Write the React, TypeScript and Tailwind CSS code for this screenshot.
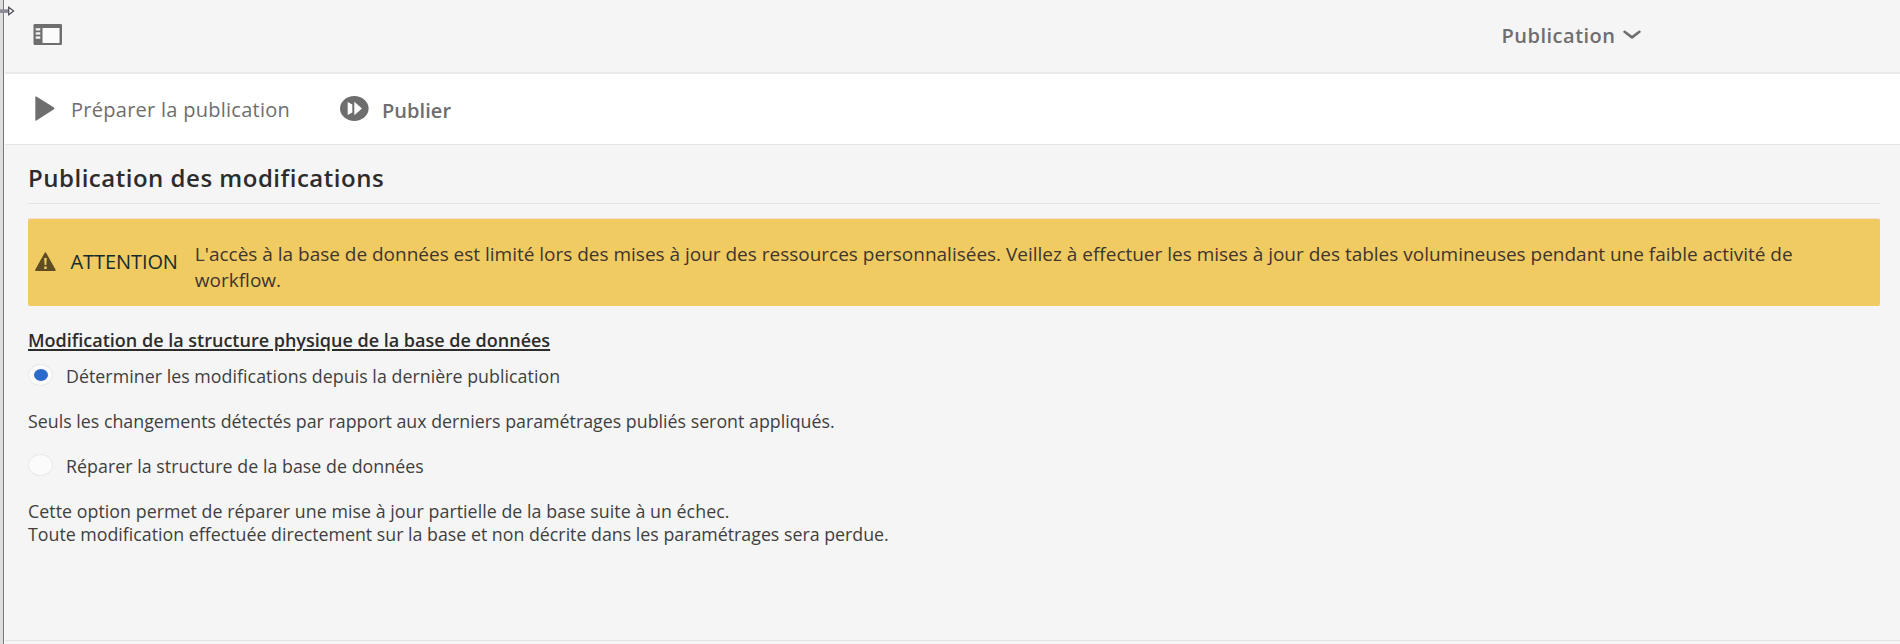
import type { ReactNode } from "react";

function PanelIcon() {
  return (
    <svg width="30" height="22" viewBox="0 0 30 22" className="block">
      <rect x="0.5" y="0" width="28.5" height="21" rx="1.2" fill="#6e6e6e" />
      <rect x="9.5" y="4" width="17" height="15" fill="#fbfbfb" />
      <rect x="2.7" y="4.2" width="4.6" height="2.3" fill="#f5f5f5" />
      <rect x="2.7" y="8.3" width="4.6" height="2.3" fill="#f5f5f5" />
      <rect x="2.7" y="12.4" width="4.6" height="2.3" fill="#f5f5f5" />
    </svg>
  );
}

function PlayIcon() {
  return (
    <svg width="20" height="26" viewBox="0 0 20 26" className="block">
      <path d="M0.3 1.2Q0.3 0 1.4 0.6L19 11.6Q19.8 12.4 19 13.2L1.4 24.6Q0.3 25.2 0.3 24Z" fill="#6e6e6e" />
    </svg>
  );
}

function PublishIcon() {
  return (
    <svg width="29" height="26" viewBox="0 0 29 26" className="block">
      <ellipse cx="14.3" cy="12.5" rx="14.3" ry="12.5" fill="#6e6e6e" />
      <path d="M7.7 6L12.3 8.4V16.6L7.7 19ZM14.3 5.8L22 12.5L14.3 19.2Z" fill="#fff" />
    </svg>
  );
}

function WarningIcon() {
  return (
    <svg width="21" height="20" viewBox="0 0 21 20" className="block">
      <path d="M9.6 0.9Q10.4 -0.2 11.2 0.9L20.6 17.8Q21 19 19.8 19H1Q-0.2 19 0.2 17.8Z" fill="#5e4d24" />
      <path d="M9.2 6H11.7L11.3 13H9.6ZM9.2 14.6H11.7V17H9.2Z" fill="#f0cb62" />
    </svg>
  );
}

function Radio({ checked, children }: { checked?: boolean; children: ReactNode }) {
  return (
    <label className="flex h-[22px] items-start">
      <span className="mr-[13px] flex h-[22px] w-[25px] shrink-0 items-center justify-center rounded-[50%] border-[1.5px] border-[#e9e9e9] bg-[#fbfbfb]">
        {checked && <span className="h-[12px] w-[14px] rounded-[50%] bg-[#2c6bc9]" />}
      </span>
      <span className="mt-px whitespace-nowrap text-[17.8px] leading-[22px] tracking-[0.04px]">{children}</span>
    </label>
  );
}

export default function App() {
  return (
    <div className="relative flex h-[644px] w-[1900px] overflow-hidden bg-[#f5f5f5] font-['Open_Sans',sans-serif] text-[#3f3f3f]">
      <div className="w-[5px] shrink-0 border-r border-r-[#fafafa] bg-[#dedede]">
        <div className="ml-[3px] h-full w-px bg-[#777]" />
      </div>
      <svg width="16" height="12" viewBox="0 0 16 12" className="absolute left-0 top-[5px]">
        <rect x="0" y="4.3" width="9" height="3.6" fill="#8d8993" />
        <path d="M8.7 2.2L13.6 6L8.7 9.8Z" fill="#fff" stroke="#4a4552" strokeWidth="1.2" />
      </svg>
      <div className="flex min-w-0 flex-1 flex-col">
        <header className="flex h-[74px] shrink-0 border-b-2 border-[#e9e9e9] pl-[27.5px] text-[#6e6e6e]">
          <div className="pt-6">
            <PanelIcon />
          </div>
          <div className="ml-[1439px] mt-[22px] flex h-7 gap-[7px]">
            <span className="text-[20px] font-semibold leading-7 tracking-[0.5px]">Publication</span>
            <svg width="18" height="10" viewBox="0 0 18 10" className="mt-[8px]">
              <path d="M1.6 1.8L9 7.4L16.4 1.8" fill="none" stroke="#6e6e6e" strokeWidth="2.6" strokeLinecap="round" strokeLinejoin="round" />
            </svg>
          </div>
        </header>

        <nav className="flex h-[71px] shrink-0 border-b border-[#e4e4e4] bg-white pl-[30px] pt-[22px] text-[#6e6e6e]">
          <PlayIcon />
          <span className="ml-4 mt-[-1px] w-[269px] whitespace-nowrap text-[20px] leading-[30px] tracking-[0.27px]">Préparer la publication</span>
          <PublishIcon />
          <span className="ml-[13px] text-[20px] font-semibold leading-[30px] tracking-[0.05px]">Publier</span>
        </nav>

        <main className="flex-1 pl-[23px] pr-5">
          <h1 className="h-[59px] border-b border-[#e4e4e4] pt-[18px] text-[24px] font-semibold leading-[30px] tracking-[0.51px] text-[#2c2c2c]">Publication des modifications</h1>

          <section className="mt-[14px] flex h-[88px] rounded-[2px] border-t border-[#f6dcd2] bg-[#f0cb62] pl-[6.5px]">
            <div className="mt-[33px]">
              <WarningIcon />
            </div>
            <strong className="ml-[15px] mt-7 text-[20px] font-normal leading-[30px] tracking-[-0.08px] text-[#152c2c]">ATTENTION</strong>
            <p className="ml-[17px] mt-[22px] w-[1620px] text-[19px] font-medium leading-[26px] tracking-[-0.01px] text-[#40352f]">
              L'accès à la base de données est limité lors des mises à jour des ressources personnalisées. Veillez à effectuer les mises à jour des tables volumineuses pendant une faible activité de workflow.
            </p>
          </section>

          <h2 className="mt-[22px] text-[18px] font-semibold leading-6 text-[#2c2c2c] underline decoration-[1.5px] underline-offset-[2px]">Modification de la structure physique de la base de données</h2>

          <div className="mt-[12px]">
            <Radio checked>Déterminer les modifications depuis la dernière publication</Radio>
            <p className="mt-[24px] text-[17.8px] leading-[22px] tracking-[0.01px]">Seuls les changements détectés par rapport aux derniers paramétrages publiés seront appliqués.</p>
            <div className="mt-[22px]">
              <Radio>Réparer la structure de la base de données</Radio>
            </div>
            <p className="mt-[24px] text-[17.8px] leading-[23px]">
              <span className="tracking-[0.05px]">Cette option permet de réparer une mise à jour partielle de la base suite à un échec.</span>
              <br />
              Toute modification effectuée directement sur la base et non décrite dans les paramétrages sera perdue.
            </p>
          </div>
        </main>
        <footer className="h-1 shrink-0 border-t border-[#e2e2e2]" />
      </div>
    </div>
  );
}
